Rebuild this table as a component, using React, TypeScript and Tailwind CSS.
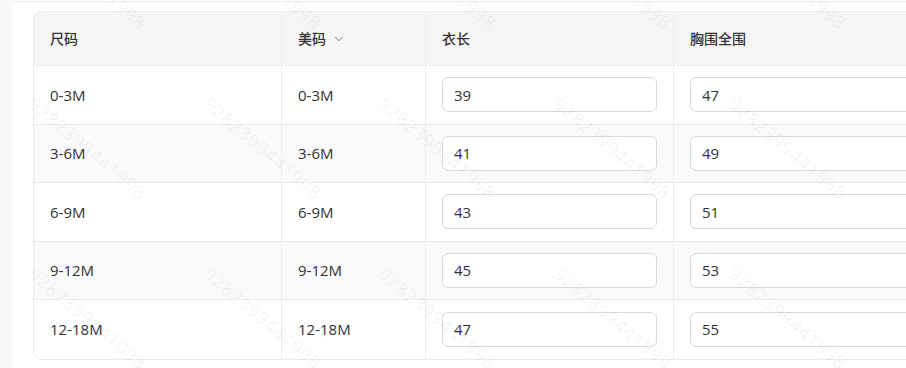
import { ChevronDown } from "lucide-react";

const rows = [
  { size: "0-3M", us: "0-3M", length: "39", chest: "47" },
  { size: "3-6M", us: "3-6M", length: "41", chest: "49" },
  { size: "6-9M", us: "6-9M", length: "43", chest: "51" },
  { size: "9-12M", us: "9-12M", length: "45", chest: "53" },
  { size: "12-18M", us: "12-18M", length: "47", chest: "55" },
];

const marks: { x: number; y: number }[] = [];
for (const y of [-73, 97, 267]) {
  for (const x of [40, 215, 390, 565, 740]) {
    marks.push({ x, y });
  }
}

const font = {
  fontFamily: '"Open Sans", "Noto Sans CJK SC", sans-serif',
};

const App = () => {
  return (
    <div
      className="relative flex h-[368px] w-[906px] overflow-hidden bg-white text-[15px] text-[#333]"
      style={font}
    >
      <div className="w-[12px] shrink-0 bg-[#f8f8f8]" />
      <div className="mt-[1px] flex-1 overflow-hidden border-t border-[#ececec] pl-[21px] pt-[9px]">
        <div className="w-[920px] overflow-hidden rounded-[8px] border border-[#ebebeb]">
          <div className="grid h-[54px] grid-cols-[248px_144px_248px_280px] border-b border-[#ebebeb] bg-[#f5f5f5] text-[14px] font-medium">
            <div className="flex items-center border-r border-[#ebebeb] px-4">尺码</div>
            <div className="flex items-center gap-1.5 border-r border-[#ebebeb] px-4">
              美码
              <ChevronDown className="h-[14px] w-[14px] text-[#666]" strokeWidth={1.5} />
            </div>
            <div className="flex items-center border-r border-[#ebebeb] px-4">衣长</div>
            <div className="flex items-center px-4">胸围全围</div>
          </div>
          {rows.map((row, i) => (
            <div
              key={row.size}
              className={
                "grid h-[58.5px] grid-cols-[248px_144px_248px_280px] " +
                (i < rows.length - 1 ? "border-b border-[#ebebeb] " : "") +
                (i % 2 === 1 ? "bg-[#fafafa]" : "bg-white")
              }
            >
              <div className="flex items-center border-r border-[#ebebeb] px-4">{row.size}</div>
              <div className="flex items-center border-r border-[#ebebeb] px-4">{row.us}</div>
              <div className="flex items-center border-r border-[#ebebeb] px-4">
                <input
                  defaultValue={row.length}
                  className="h-[35px] w-full rounded-[6px] border border-[#d9d9d9] bg-white px-[11px] text-[15px] text-[#333] outline-none"
                  style={font}
                />
              </div>
              <div className="flex items-center pl-4">
                <input
                  defaultValue={row.chest}
                  className="h-[35px] w-[232px] rounded-[6px] border border-[#d9d9d9] bg-white px-[11px] text-[15px] text-[#333] outline-none"
                  style={font}
                />
              </div>
            </div>
          ))}
        </div>
      </div>
      <div className="pointer-events-none absolute inset-0">
        {marks.map((m) => (
          <div
            key={`${m.x}-${m.y}`}
            className="absolute origin-top-left rotate-[40deg] whitespace-nowrap text-[18px] tracking-[1px] text-[rgba(0,0,0,0.06)]"
            style={{ left: m.x, top: m.y - 6 }}
          >
            9282399441998
          </div>
        ))}
      </div>
    </div>
  );
};

export default App;
